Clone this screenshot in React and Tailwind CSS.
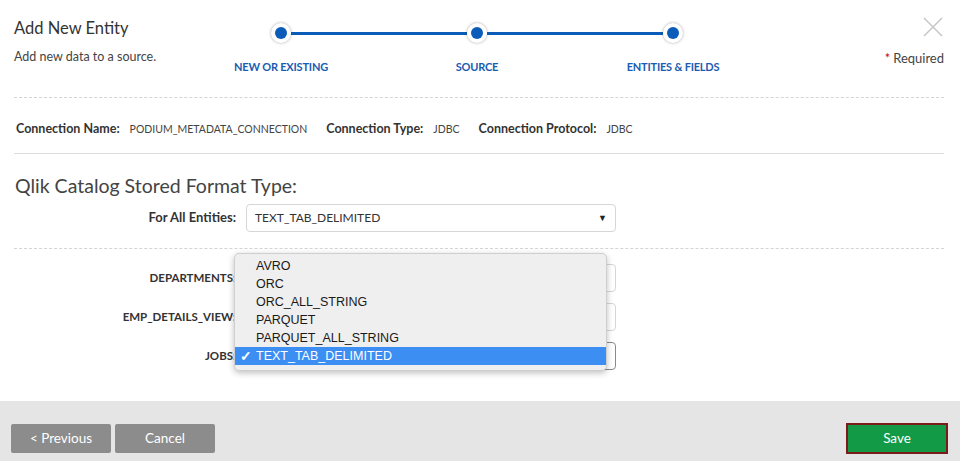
import React from "react";

const steps = ["NEW OR EXISTING", "SOURCE", "ENTITIES & FIELDS"];
const formats = ["AVRO", "ORC", "ORC_ALL_STRING", "PARQUET", "PARQUET_ALL_STRING", "TEXT_TAB_DELIMITED"];
const entities = ["DEPARTMENTS", "EMP_DETAILS_VIEW", "JOBS"];

function StepDot() {
  return (
    <div className="w-[20px] h-[20px] rounded-full bg-white shadow-[0_0_3px_rgba(0,0,0,0.35)] flex items-center justify-center shrink-0">
      <div className="w-[12px] h-[12px] rounded-full bg-[#0b5cb8]" />
    </div>
  );
}

function SelectBox({ value, focused }) {
  return (
    <div
      className={`w-[370px] h-[28px] rounded-[4px] border bg-white flex items-center px-[8px] text-[12px] text-[#333] ${
        focused ? "border-[#8a8a8a]" : "border-[#d6d6d6]"
      }`}
    >
      <span className="flex-1">{value}</span>
      <span className="text-[9px] text-[#222]">▼</span>
    </div>
  );
}

export default function App() {
  return (
    <div className="w-[960px] h-[461px] flex flex-col bg-white text-[#333] font-['Lato',sans-serif] overflow-hidden">
      {/* Header */}
      <div className="mx-[14px] mr-[16px] h-[98px] flex items-start border-b border-dashed border-[#d4d4d4] shrink-0">
        <div className="w-[169px] pt-[16px]">
          <div className="text-[16.5px] leading-[24px] text-[#333]">Add New Entity</div>
          <div className="mt-[7px] text-[12.5px] leading-[20px] text-[#444]">Add new data to a source.</div>
        </div>

        {/* Stepper */}
        <div className="w-[588px] pt-[23px]">
          <div className="flex items-center pl-[88px]">
            <StepDot />
            <div className="w-[176px] h-[3px] bg-[#0b5cb8]" />
            <StepDot />
            <div className="w-[176px] h-[3px] bg-[#0b5cb8]" />
            <StepDot />
          </div>
          <div className="flex mt-[16px]">
            {steps.map((s) => (
              <div key={s} className="w-[196px] text-center text-[11px] leading-[16px] font-bold tracking-[-0.2px] text-[#1a5cb2]">
                {s}
              </div>
            ))}
          </div>
        </div>

        <div className="flex-1 flex flex-col items-end pt-[17px]">
          <svg width="20" height="20" viewBox="0 0 20 20" className="mr-[1px]">
            <path d="M1 1L19 19M19 1L1 19" stroke="#c6c6c6" strokeWidth="1.5" fill="none" />
          </svg>
          <div className="mt-[11px] text-[13px] leading-[20px] text-[#444]">
            <span className="text-[#d0021b] mr-[3px]">*</span>Required
          </div>
        </div>
      </div>

      {/* Connection info */}
      <div className="mx-[14px] mr-[16px] h-[56px] pl-[2px] pt-[8px] flex items-center border-b border-[#dddddd] shrink-0 text-[12.5px]">
        <span className="font-bold text-[#333]">Connection Name:</span>
        <span className="ml-[10px] text-[10.5px] text-[#444]">PODIUM_METADATA_CONNECTION</span>
        <span className="ml-[19px] font-bold text-[#333]">Connection Type:</span>
        <span className="ml-[10px] text-[10.5px] text-[#444]">JDBC</span>
        <span className="ml-[19px] font-bold text-[#333]">Connection Protocol:</span>
        <span className="ml-[10px] text-[10.5px] text-[#444]">JDBC</span>
      </div>

      {/* Stored format */}
      <div className="mx-[14px] mr-[16px] border-b border-dashed border-[#d4d4d4] pb-[16px] shrink-0">
        <div className="mt-[20px] pl-[1px] text-[19.5px] leading-[24px] text-[#444]">Qlik Catalog Stored Format Type:</div>
        <div className="mt-[6px] flex items-center">
          <div className="w-[222px] text-right text-[13px] font-bold text-[#333]">For All Entities:</div>
          <div className="ml-[10px]">
            <SelectBox value="TEXT_TAB_DELIMITED" />
          </div>
        </div>
      </div>

      {/* Entity rows */}
      <div className="relative flex-1 mx-[14px] pt-[15px]">
        <div className="flex flex-col gap-[11px]">
          {entities.map((e, i) => (
            <div key={e} className="flex items-center">
              <div className="w-[222px] text-right text-[11.5px] font-bold text-[#333]">{e}:</div>
              <div className="ml-[10px]">
                <SelectBox value="" focused={i === 2} />
              </div>
            </div>
          ))}
        </div>

        {/* Open dropdown menu */}
        <div className="absolute left-[220px] top-[4px] w-[373px] rounded-[5px] bg-[#efefef] border border-[#cfcfcf] shadow-[0_2px_6px_rgba(0,0,0,0.25)] pt-[3px] pb-[5px] font-['Liberation_Sans',Arial,sans-serif]">
          {formats.map((f) => {
            const sel = f === "TEXT_TAB_DELIMITED";
            return (
              <div
                key={f}
                className={`h-[18px] flex items-center text-[12.5px] ${sel ? "bg-[#3d8ef2] text-white" : "text-[#1a1a1a]"}`}
              >
                <span className="w-[21px] pl-[5px] text-[14px] font-bold leading-none">{sel ? "✓" : ""}</span>
                <span>{f}</span>
              </div>
            );
          })}
        </div>
      </div>

      {/* Footer */}
      <div className="h-[60px] bg-[#e5e5e5] flex items-start justify-between px-[11px] pr-[12px] pt-[23px] shrink-0">
        <div className="flex gap-[4px]">
          <button className="w-[100px] h-[29px] rounded-[2px] bg-[#8c8c8c] text-white text-[13.5px]">&lt; Previous</button>
          <button className="w-[100px] h-[29px] rounded-[2px] bg-[#8c8c8c] text-white text-[13.5px]">Cancel</button>
        </div>
        <button className="-mt-[1px] w-[102px] h-[31px] bg-[#129a47] border-2 border-[#7a1c1c] text-white text-[13.5px]">Save</button>
      </div>
    </div>
  );
}
